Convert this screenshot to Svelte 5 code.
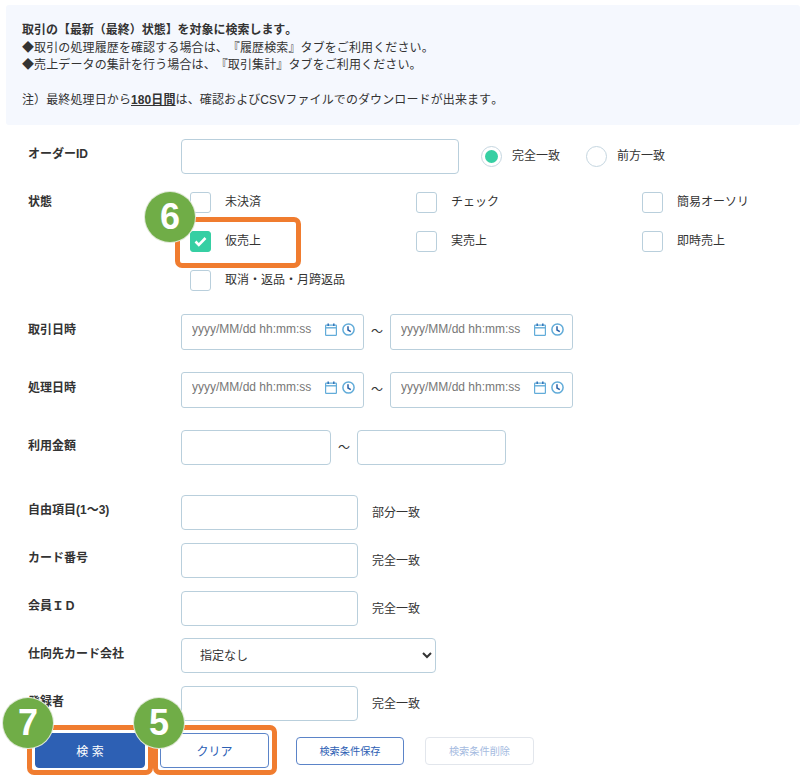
<script>
  const statuses = [
    { label: '未決済' }, { label: 'チェック' }, { label: '簡易オーソリ' },
    { label: '仮売上', checked: true }, { label: '実売上' }, { label: '即時売上' },
    { label: '取消・返品・月跨返品' }
  ];
  const dateRows = [
    { label: '取引日時', cls: 'first' },
    { label: '処理日時', cls: 'second' }
  ];
  const textRows = [
    { label: '自由項目(1～3)', match: '部分一致', cls: 'free' },
    { label: 'カード番号', match: '完全一致', cls: 'next' },
    { label: '会員ＩＤ', match: '完全一致', cls: 'next' }
  ];
</script>

{#snippet dateField()}
  <div class="date">
    <input class="date-input" placeholder="yyyy/MM/dd hh:mm:ss" />
    <div class="date-icons">
      <svg width="12" height="13" viewBox="0 0 12 13" fill="none">
        <rect x="0.6" y="2.1" width="10.8" height="10.3" rx="0.6" stroke="#62acd9" stroke-width="1.2" />
        <path d="M0.6 4.8H11.4" stroke="#62acd9" stroke-width="1.4" />
        <path d="M3.2 0.4V3M8.8 0.4V3" stroke="#2f73b8" stroke-width="1.5" />
      </svg>
      <svg width="13" height="13" viewBox="0 0 13 13" fill="none">
        <circle cx="6.5" cy="6.5" r="5.6" stroke="#62acd9" stroke-width="1.5" />
        <path d="M6 3.2V7L8.8 8.6" stroke="#2a62a8" stroke-width="1.5" />
      </svg>
    </div>
  </div>
{/snippet}

<div class="page">
  <section class="notice">
    <p class="strong">取引の【最新（最終）状態】を対象に検索します。</p>
    <p>◆取引の処理履歴を確認する場合は、『履歴検索』タブをご利用ください。</p>
    <p>◆売上データの集計を行う場合は、『取引集計』タブをご利用ください。</p>
    <p class="blank">&nbsp;</p>
    <p>注）最終処理日から<b class="under">180日間</b>は、確認およびCSVファイルでのダウンロードが出来ます。</p>
  </section>

  <form class="form">
    <div class="row order">
      <div class="label">オーダーID</div>
      <input class="field w-order" />
      <div class="radios">
        <span class="radio on"><i></i></span><span class="radio-text">完全一致</span>
        <span class="radio"></span><span class="radio-text">前方一致</span>
      </div>
    </div>

    <div class="row state">
      <div class="label state-label">状態</div>
      <div class="checks">
        {#each statuses as s}
          <div class="check">
            <span class="box" class:checked={s.checked}>
              {#if s.checked}
                <svg width="13" height="11" viewBox="0 0 13 11" fill="none"><path d="M1.5 5.5L4.8 8.8L11.5 2" stroke="#fff" stroke-width="2.6" /></svg>
              {/if}
            </span>
            <span class="check-text">{s.label}</span>
          </div>
        {/each}
      </div>
    </div>

    {#each dateRows as r}
      <div class="row {r.cls}">
        <div class="label low">{r.label}</div>
        {@render dateField()}
        <span class="tilde">～</span>
        {@render dateField()}
      </div>
    {/each}

    <div class="row amount">
      <div class="label low">利用金額</div>
      <input class="field w-amount" />
      <span class="tilde">～</span>
      <input class="field w-amount w-amount-to" />
    </div>

    {#each textRows as r}
      <div class="row {r.cls}">
        <div class="label">{r.label}</div>
        <input class="field w-text" />
        <span class="match">{r.match}</span>
      </div>
    {/each}

    <div class="row select-row">
      <div class="label low">仕向先カード会社</div>
      <select class="field w-select"><option>指定なし</option></select>
    </div>

    <div class="row next">
      <div class="label low">登録者</div>
      <input class="field w-text" />
      <span class="match">完全一致</span>
    </div>

    <div class="actions">
      <button type="button" class="btn primary">検 索</button>
      <button type="button" class="btn clear">クリア</button>
      <button type="button" class="btn mini save">検索条件保存</button>
      <button type="button" class="btn mini del">検索条件削除</button>
    </div>
  </form>

  <div class="hl hl-6"></div>
  <div class="hl hl-7"></div>
  <div class="hl hl-5"></div>
  <div class="step s6">6</div>
  <div class="step s7">7</div>
  <div class="step s5">5</div>
</div>

<style>
  :global(body) { margin: 0; background: #fff; }
  .page {
    position: relative;
    width: 800px;
    height: 775px;
    overflow: hidden;
    font-family: "Liberation Sans", "Noto Sans CJK JP", sans-serif;
    font-size: 12px;
    color: #333;
    text-spacing-trim: space-all;
    font-kerning: none;
  }
  .notice {
    margin: 5px 0 0 6px;
    height: 120px;
    box-sizing: border-box;
    padding: 17px 16px 0;
    background: #f5f8fe;
    border-radius: 3px;
    line-height: 17.5px;
  }
  .notice p { margin: 0; letter-spacing: 0.11px; }
  .notice .strong { font-weight: 600; letter-spacing: -0.03px; }
  .under { text-decoration: underline; }
  .form { padding-left: 28px; }
  .row { display: flex; align-items: center; }
  .label {
    width: 153px;
    flex: none;
    font-weight: 700;
    align-self: flex-start;
    line-height: 18px;
    padding-top: 6px;
  }
  .label.low { padding-top: 7px; }
  .field {
    box-sizing: border-box;
    height: 35px;
    border: 1px solid #b9cfdc;
    border-radius: 4px;
    background: #fff;
    font: inherit;
    color: #333;
    margin: 0;
    padding: 0 10px;
    outline: none;
  }
  .w-order { width: 278px; }
  .w-amount { width: 150px; }
  .w-amount-to { width: 149px; }
  .w-text { width: 177px; }
  .w-select { width: 255px; padding-left: 14px; }
  .order { margin-top: 14px; }
  .radios { display: flex; align-items: center; margin-left: 22px; }
  .radio {
    width: 21px; height: 21px; box-sizing: border-box;
    border: 1px solid #c5d6e0; border-radius: 50%;
    display: flex; align-items: center; justify-content: center;
  }
  .radio i { width: 13px; height: 13px; border-radius: 50%; background: #36cfa3; }
  .radio-text { margin: -5px 26px 0 10px; }
  .state { margin-top: 18px; align-items: flex-start; }
  .state-label { padding-top: 1px; }
  .checks {
    margin-left: 9px;
    display: grid;
    grid-template-columns: repeat(3, 226px);
    grid-auto-rows: 39px;
  }
  .check { display: flex; align-items: flex-start; height: 21px; }
  .box {
    width: 21px; height: 21px; box-sizing: border-box;
    border: 1px solid #b9cfdc; border-radius: 3px;
    display: flex; align-items: center; justify-content: center;
    background: #fff;
  }
  .box.checked { background: #36cfa3; border-color: #36cfa3; }
  .check-text { margin-left: 14px; line-height: 18px; padding-top: 1px; white-space: nowrap; }
  .first { margin-top: 5px; }
  .second { margin-top: 22px; }
  .date { position: relative; width: 183px; height: 36px; }
  .date-input {
    box-sizing: border-box;
    width: 100%; height: 100%;
    border: 1px solid #b9cfdc; border-radius: 3px;
    font: inherit; margin: 0;
    padding: 0 10px 6px;
    outline: none;
  }
  .date-input::placeholder { color: #777; opacity: 1; }
  .date-icons {
    position: absolute; top: 9px; right: 9px;
    display: flex; gap: 5px; line-height: 0;
  }
  .tilde { width: 26px; text-align: center; flex: none; margin-top: -3px; }
  .amount { margin-top: 22px; }
  .match { margin: -3px 0 0 14px; }
  .free { margin-top: 30px; }
  .next { margin-top: 13px; }
  .select-row { margin-top: 12px; }
  .actions { display: flex; align-items: center; margin: 12px 0 0 7px; }
  .btn {
    box-sizing: border-box;
    font: inherit;
    border-radius: 4px;
    margin: 0;
    padding: 0;
  }
  .primary {
    width: 110px; height: 35px;
    background: #2d60b4; color: #fff;
    border: 1px solid #2d60b4;
  }
  .clear {
    width: 109px; height: 35px; margin-left: 15px;
    background: #fff; color: #2d60b4;
    border: 1px solid #5b84c8;
  }
  .mini { width: 108px; height: 28px; font-size: 10.2px; background: #fff; }
  .save { margin-left: 27px; color: #2d60b4; border: 1px solid #5b84c8; }
  .del { margin-left: 21px; width: 109px; color: #a5bbdf; border: 1px solid #e2e6ec; }

  .hl {
    position: absolute;
    box-sizing: border-box;
    border: 5px solid #f07c2f;
    border-radius: 7px;
  }
  .hl-6 { left: 175px; top: 217px; width: 126px; height: 51px; }
  .hl-7 { left: 27px; top: 725px; width: 126px; height: 50px; }
  .hl-5 { left: 153px; top: 725px; width: 124px; height: 50px; }
  .step {
    position: absolute;
    width: 50px; height: 50px;
    border-radius: 50%;
    background: #70ad47;
    color: #fff;
    font-family: "Liberation Sans", sans-serif;
    font-weight: 700;
    font-size: 36px;
    line-height: 50px;
    text-align: center;
    box-shadow: 0 0 0 1px #dfe8d6;
  }
  .s6 { left: 145px; top: 192px; }
  .s7 { left: 3px; top: 698px; }
  .s5 { left: 134px; top: 698px; }
</style>
